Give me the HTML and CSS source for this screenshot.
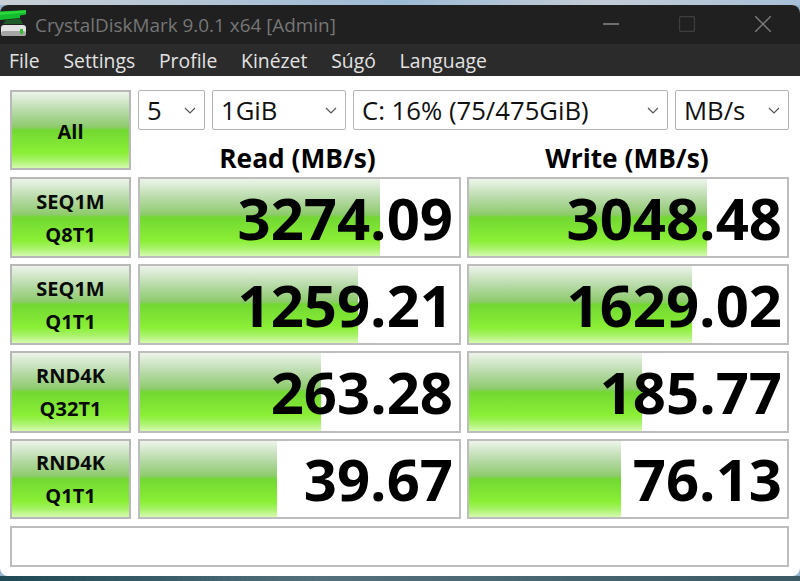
FILE: index.html
```html
<!DOCTYPE html>
<html lang="en">
<head>
<meta charset="utf-8">
<title>CrystalDiskMark</title>
<link rel="stylesheet" href="styles.css">
</head>
<body>
<div class="wallpaper"></div>
<div class="window">
  <header class="titlebar">
    <svg class="app-icon" viewBox="0 0 28 28" width="28" height="28" aria-hidden="true">
      <path d="M0 2.5 L26 1 L26 5.5 L20 6.5 L20 9 L0 11 Z" fill="#14bd2e"/>
      <path d="M0 3 L26 1.5 L26 3.5 L0 6 Z" fill="#2bd93c"/>
      <path d="M6 11 L20 9.5 L23 15 L3 15 Z" fill="#1f5c2a"/>
      <rect x="1" y="16" width="25" height="11" rx="3" fill="#e2e2e2"/>
      <rect x="1" y="22" width="25" height="5" rx="2.5" fill="#a5a5a5"/>
      <rect x="20" y="20" width="3" height="5" fill="#35c035"/>
    </svg>
    <span class="title">CrystalDiskMark 9.0.1 x64 [Admin]</span>
    <div class="controls">
      <svg class="ctl" viewBox="0 0 16 16" width="16" height="16"><path d="M0 8 H16" stroke="#8a8a8a" stroke-width="1.4"/></svg>
      <svg class="ctl" viewBox="0 0 16 16" width="16" height="16"><rect x="0.5" y="0.5" width="15" height="15" rx="2" fill="none" stroke="#3e3e3e" stroke-width="1.3"/></svg>
      <svg class="ctl" viewBox="0 0 16 16" width="16" height="16"><path d="M0 0 L16 16 M16 0 L0 16" stroke="#7c7c7c" stroke-width="1.4"/></svg>
    </div>
  </header>
  <nav class="menubar">
    <span>File</span><span>Settings</span><span>Profile</span><span>Kinézet</span><span>Súgó</span><span>Language</span>
  </nav>
  <main class="content">
    <section class="top">
      <button class="tile all">All</button>
      <div class="top-right">
        <div class="selects">
          <div class="select s-count">5<svg class="chev" viewBox="0 0 12 7" width="12" height="7"><path d="M1 1 L6 6 L11 1" fill="none" stroke="#555" stroke-width="1.2"/></svg></div>
          <div class="select s-size">1GiB<svg class="chev" viewBox="0 0 12 7" width="12" height="7"><path d="M1 1 L6 6 L11 1" fill="none" stroke="#555" stroke-width="1.2"/></svg></div>
          <div class="select s-drive">C: 16% (75/475GiB)<svg class="chev" viewBox="0 0 12 7" width="12" height="7"><path d="M1 1 L6 6 L11 1" fill="none" stroke="#555" stroke-width="1.2"/></svg></div>
          <div class="select s-unit">MB/s<svg class="chev" viewBox="0 0 12 7" width="12" height="7"><path d="M1 1 L6 6 L11 1" fill="none" stroke="#555" stroke-width="1.2"/></svg></div>
        </div>
        <div class="heads">
          <div class="head head-read">Read (MB/s)</div>
          <div class="head head-write">Write (MB/s)</div>
        </div>
      </div>
    </section>
    <section class="rows">
      <button class="tile label"><span>SEQ1M</span><span>Q8T1</span></button>
      <div class="result read"><div class="bar" style="width:240px"></div><span class="value">3274.09</span></div>
      <div class="result"><div class="bar" style="width:238px"></div><span class="value">3048.48</span></div>
      <button class="tile label"><span>SEQ1M</span><span>Q1T1</span></button>
      <div class="result read"><div class="bar" style="width:218px"></div><span class="value">1259.21</span></div>
      <div class="result"><div class="bar" style="width:223px"></div><span class="value">1629.02</span></div>
      <button class="tile label"><span>RND4K</span><span>Q32T1</span></button>
      <div class="result read"><div class="bar" style="width:181px"></div><span class="value">263.28</span></div>
      <div class="result"><div class="bar" style="width:173px"></div><span class="value">185.77</span></div>
      <button class="tile label"><span>RND4K</span><span>Q1T1</span></button>
      <div class="result read"><div class="bar" style="width:137px"></div><span class="value">39.67</span></div>
      <div class="result"><div class="bar" style="width:152px"></div><span class="value">76.13</span></div>
    </section>
    <div class="message"></div>
  </main>
</div>
<div class="wallpaper bottom"></div>
</body>
</html>
```
FILE: styles.css
```css
* { box-sizing: border-box; }
html, body { margin: 0; height: 100%; }
body {
  width: 800px;
  height: 581px;
  overflow: hidden;
  display: flex;
  flex-direction: column;
  background: #8fb3cf;
  font-family: "Open Sans", "Noto Sans", "Liberation Sans", sans-serif;
}
.wallpaper {
  height: 5px;
  flex: none;
  background: linear-gradient(90deg, #c9cfd6, #9dbbd6 50%, #c3ccd6 75%, #a7c0d8);
}
.wallpaper.bottom { background: linear-gradient(90deg, #1f4a55, #53707c 40%, #3b5a66); }
.window {
  flex: none;
  height: 571px;
  border-radius: 8px;
  overflow: hidden;
  background: #fff;
  display: flex;
  flex-direction: column;
}
.titlebar {
  height: 39px;
  flex: none;
  background: #202020;
  display: flex;
  align-items: center;
}
.app-icon { flex: none; margin: 0 7px 3px 0; }
.title { color: #767676; font-size: 18.9px; white-space: nowrap; }
.controls { margin: 0 29px 2px auto; display: flex; gap: 60px; align-items: center; }
.menubar {
  height: 32px;
  flex: none;
  background: #2b2b2b;
  color: #e2e2e2;
  font-size: 19.35px;
  display: flex;
  align-items: center;
  gap: 23.8px;
  padding: 0 0 0 9px;
}
.content {
  flex: 1;
  padding: 14px 11px 10px 10px;
  display: flex;
  flex-direction: column;
  gap: 7px;
}
.top { display: grid; grid-template-columns: 122px 1fr; column-gap: 6px; }
.top .all { margin-right: 1px; height: 80px; padding-top: 2px; }
.top-right { display: flex; flex-direction: column; }
.selects { display: flex; height: 40px; gap: 7px; }
.select {
  border: 1px solid #b4b4b4;
  border-radius: 2px;
  background: #fff;
  color: #111;
  font-size: 25.7px;
  display: flex;
  align-items: center;
  justify-content: space-between;
  padding: 0 8px;
}
.s-count { width: 67px; }
.s-size { width: 134px; }
.s-drive { width: 315px; }
.s-unit { width: 114px; }
.heads { display: grid; grid-template-columns: 323px 322px; column-gap: 6px; height: 40px; }
.head { font-size: 26.3px; font-weight: 700; color: #000; text-align: center; line-height: 56px; }
.head-read { padding-right: 4px; }
.head-write { padding-right: 2px; }
.rows {
  display: grid;
  grid-template-columns: 122px 323px 322px;
  grid-template-rows: 81px 81px 82px 80px;
  column-gap: 6px;
  row-gap: 6px;
}
.tile {
  border: 2px solid #b8b8b8;
  padding: 0;
  color: #0a0a0a;
  font-family: inherit;
  font-weight: 700;
  font-size: 20px;
  background: linear-gradient(180deg, #edf4ea 0%, #b7daa8 25%, #8ecb6c 46%, #72d832 50%, #8aef35 80%, #a8f36a 90%, #d6fab0 100%);
}
.label {
  margin-right: 1px;
  padding-top: 1px;
  display: flex;
  flex-direction: column;
  align-items: center;
  justify-content: center;
  gap: 7px;
  line-height: 26px;
}
.result {
  position: relative;
  border: 2px solid #bdbdbd;
  background: #fff;
  display: flex;
  align-items: center;
  justify-content: flex-end;
  padding-right: 5px;
}
.result.read { padding-right: 6px; }
.bar {
  position: absolute;
  left: 0;
  top: 0;
  bottom: 0;
  background: linear-gradient(180deg, #edf4ea 0%, #b7daa8 25%, #8ecb6c 46%, #72d832 50%, #8aef35 80%, #a8f36a 90%, #d6fab0 100%);
}
.value {
  position: relative;
  font-size: 58px;
  font-weight: 700;
  color: #000;
  line-height: 1;
}
.message { height: 41px; border: 2px solid #bdbdbd; background: #fff; }
```
